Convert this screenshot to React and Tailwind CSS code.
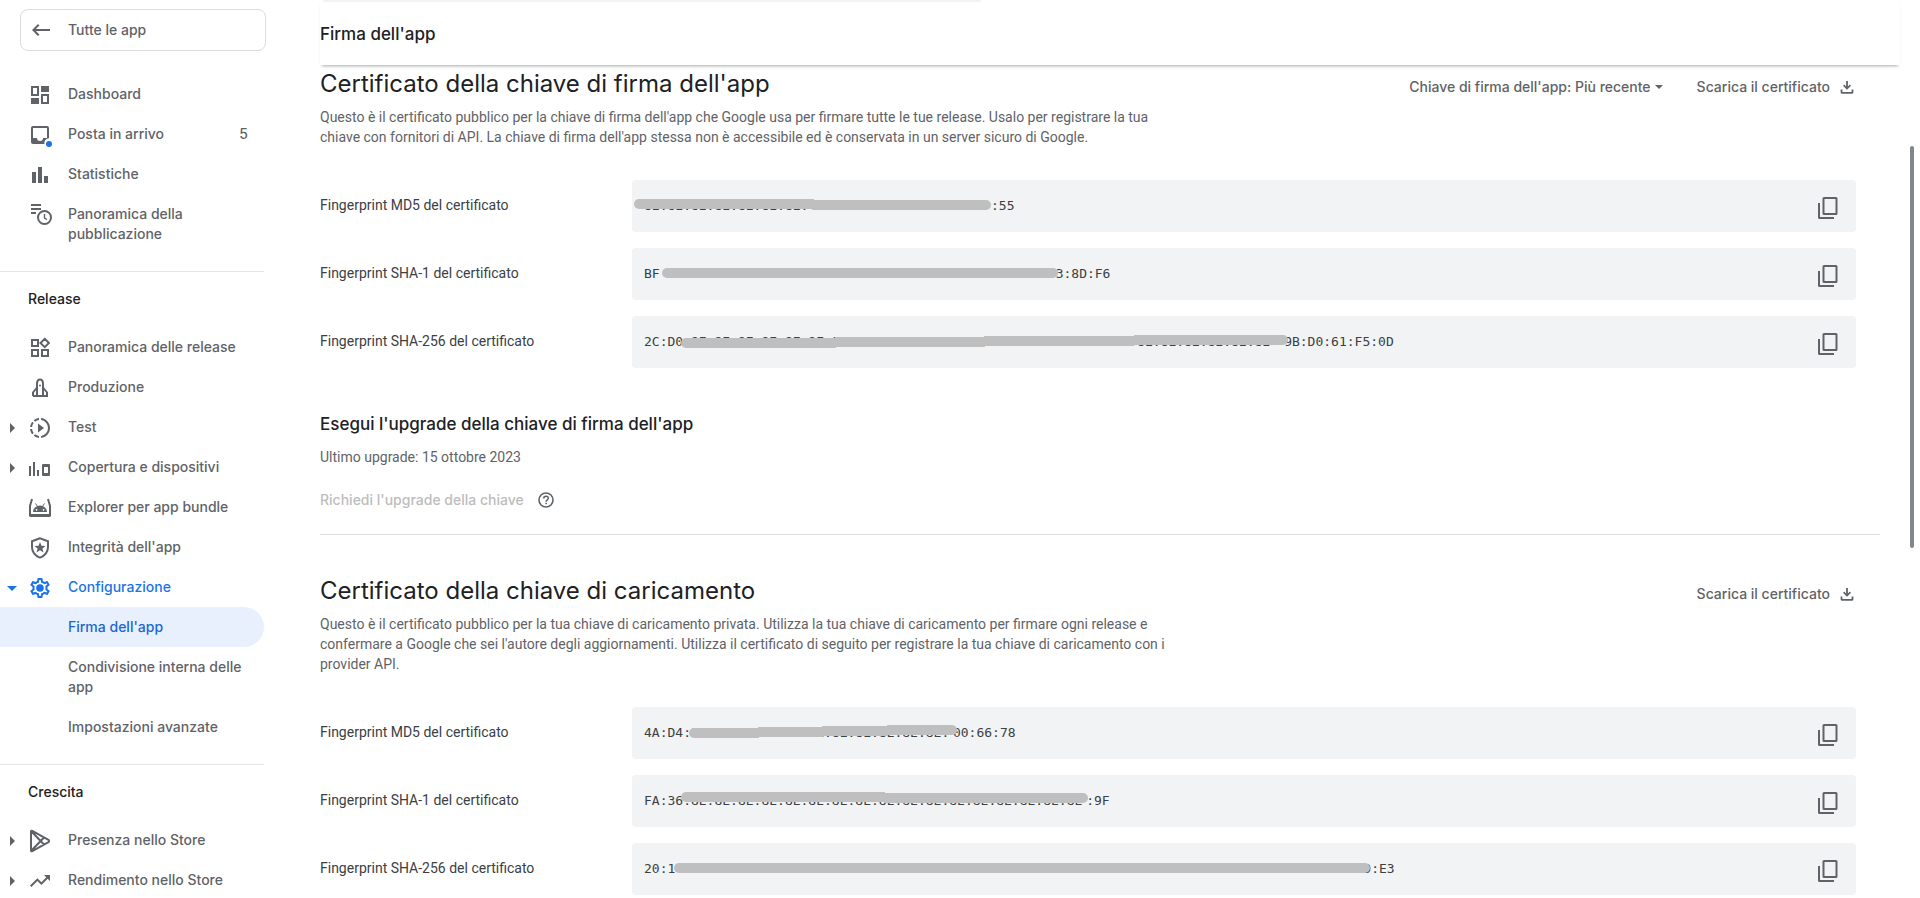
import React from "react";

const icons = {
  dashboard: (
    <path
      fill="currentColor"
      fillRule="evenodd"
      d="M3 3h8v10H3zM5 5v6h4V5zM13 3h8v6h-8zM3 15h8v6H3zM13 11h8v10h-8zM15 13v6h4v-6z"
    />
  ),
  inbox: (
    <>
      <path
        fill="currentColor"
        fillRule="evenodd"
        d="M5 3h14a2 2 0 0 1 2 2v10.2a5 5 0 0 0-4.6 5.8H5a2 2 0 0 1-2-2V5c0-1.100.9-2 2-2zM5 5v10h4a3 3 0 0 0 6 0h4V5z"
      />
      <circle cx="21" cy="21" r="3" fill="#1a73e8" />
    </>
  ),
  stats: <path fill="currentColor" d="M4 9h4v11H4zM10 4h4v16h-4zM16 13h4v7h-4z" />,
  publishing: (
    <>
      <path fill="currentColor" d="M3 1h10v2H3zM3 5h10v2H3zM3 9h5v2H3z" />
      <circle cx="16.500" cy="14.500" r="6.500" fill="#fff" stroke="currentColor" strokeWidth="2" />
      <path d="M16.500 11v4l2.500 1.500" fill="none" stroke="currentColor" strokeWidth="1.400" />
    </>
  ),
  releases: (
    <path
      fill="none"
      stroke="currentColor"
      strokeWidth="2"
      d="M4 4h6v6H4zM4 14h6v6H4zM14 14h6v6h-6zM16.700 2.800l4.200 4.200-4.200 4.200L12.500 7z"
    />
  ),
  rocket: (
    <>
      <path
        fill="none"
        stroke="currentColor"
        strokeWidth="2"
        d="M9 20V8c0-2.500 1-4.500 3-4.500s3 2 3 4.500v12M5 20h14v-3.500L15 11.500M5 20v-3.500L9 11.500"
      />
      <circle cx="12" cy="9.500" r="1" fill="currentColor" />
    </>
  ),
  test: (
    <path
      fill="currentColor"
      d="M13.050 9.790 10 7.500v9l3.050-2.290L16 12zM11 4.070V2.050c-2.010.2-3.840 1-5.320 2.210L7.100 5.690A7.940 7.940 0 0 1 11 4.070zM5.690 7.100 4.260 5.680A9.950 9.950 0 0 0 2.050 11h2.020c.18-1.460.76-2.790 1.620-3.900zM4.070 13H2.050c.2 2.010 1 3.840 2.210 5.320l1.430-1.430A7.900 7.900 0 0 1 4.070 13zm1.610 6.740A9.980 9.980 0 0 0 11 21.950v-2.020a7.940 7.940 0 0 1-3.900-1.620zM22 12c0 5.160-3.920 9.420-8.950 9.950v-2.020A8 8 0 0 0 20 12a8 8 0 0 0-6.950-7.930V2.050C18.080 2.580 22 6.840 22 12z"
    />
  ),
  reach: (
    <path
      fill="currentColor"
      fillRule="evenodd"
      d="M1 10h2v10H1zM5 6h2v14H5zM9 14h2v6H9zM15 8h6a1 1 0 0 1 1 1v10a1 1 0 0 1-1 1h-6a1 1 0 0 1-1-1V9a1 1 0 0 1 1-1zM16 11v6h4v-6z"
    />
  ),
  bundle: (
    <>
      <path fill="none" stroke="currentColor" strokeWidth="2" d="M4 3 2 10v9.500h20V10l-2-7" />
      <path stroke="currentColor" strokeWidth="1" d="m7.500 7.500 2 3M16.500 7.500l-2 3" />
      <path
        fill="currentColor"
        fillRule="evenodd"
        d="M5 16a7 6.500 0 0 1 14 0zM8.500 13a.8.8 0 1 0 .1 0zM15.500 13a.8.8 0 1 0 .1 0z"
      />
      <path fill="currentColor" d="M2 18h20v3H2z" />
    </>
  ),
  shield: (
    <>
      <path
        fill="none"
        stroke="currentColor"
        strokeWidth="2"
        d="M12 2.200 4 5.200v6c0 4.700 3.300 9 8 10.400 4.700-1.400 8-5.700 8-10.400v-6z"
      />
      <path
        fill="currentColor"
        d="m12 6 1.500 3.800 4.100.2-3.200 2.600 1.100 4-3.500-2.300-3.500 2.300 1.100-4L6.400 10l4.100-.2z"
      />
    </>
  ),
  settings: (
    <>
      <path
        fill="currentColor"
        d="M19.430 12.980c.04-.32.070-.64.070-.98s-.03-.66-.07-.98l2.110-1.650c.19-.15.24-.42.12-.64l-2-3.460a.5.5 0 0 0-.61-.22l-2.490 1a7.300 7.300 0 0 0-1.690-.98l-.38-2.650A.49.49 0 0 0 14 2h-4a.49.49 0 0 0-.49.420l-.38 2.650c-.61.250-1.170.59-1.690.98l-2.490-1a.5.5 0 0 0-.61.220l-2 3.460a.49.49 0 0 0 .12.640l2.110 1.650c-.04.320-.07.650-.07.980s.03.660.070.980l-2.110 1.650a.49.49 0 0 0-.12.640l2 3.460c.12.220.39.300.61.220l2.490-1c.52.400 1.080.73 1.690.98l.38 2.650c.03.240.24.420.49.420h4c.25 0 .46-.18.49-.42l.38-2.650c.61-.25 1.170-.59 1.690-.98l2.490 1c.23.090.49 0 .61-.22l2-3.460a.49.49 0 0 0-.12-.64zm-1.980-1.710c.04.310.050.520.050.730s-.02.430-.05.730l-.14 1.130.89.700 1.080.84-.7 1.210-1.270-.51-1.040-.42-.9.680c-.43.320-.84.560-1.250.73l-1.060.43-.16 1.130-.2 1.350h-1.400l-.35-2.480-1.060-.43c-.43-.18-.83-.41-1.230-.71l-.91-.7-1.060.43-1.270.51-.7-1.210 1.970-1.540-.14-1.130a7 7 0 0 1 0-1.480l.14-1.130-1.970-1.540.7-1.210 1.270.51 1.040.42.9-.68c.43-.32.840-.56 1.250-.73l1.060-.43.36-2.480h1.390l.35 2.480 1.060.43c.43.180.83.410 1.230.71l.91.700 1.060-.43 1.270-.51.7 1.210-1.970 1.540z"
      />
      <circle cx="12" cy="12" r="3.800" fill="currentColor" />
    </>
  ),
  play: (
    <path
      fill="none"
      stroke="currentColor"
      strokeWidth="2"
      strokeLinejoin="round"
      d="M3 2.500v19c0 .8.700 1 1.300.7L20.500 13.100c.8-.5.800-1.700 0-2.200L4.300 1.800C3.700 1.500 3 1.700 3 2.500zM3.500 21.500 16 8.500M3.500 2.500 16 15.500"
    />
  ),
  trending: (
    <path
      fill="currentColor"
      d="m16 6 2.290 2.290-4.880 4.880-4-4L2 16.590 3.410 18l6-6 4 4 6.300-6.290L22 12V6z"
    />
  ),
};

function Icon({ name }) {
  return (
    <svg viewBox="0 0 24 24" aria-hidden="true" className="size-6 shrink-0 overflow-visible">
      {icons[name]}
    </svg>
  );
}

function Caret({ open }) {
  return (
    <svg viewBox="0 0 24 24" aria-hidden="true" className="size-6 shrink-0">
      {open ? <path fill="currentColor" d="M7 10h10l-5 5z" /> : <path fill="currentColor" d="M10 7v10l5-5z" />}
    </svg>
  );
}

function NavItem({ icon, label, caret, count, active }) {
  return (
    <li>
      <a
        href="#"
        className={`flex items-start py-[10px] pr-4 leading-5 ${active ? "text-[#1a73e8]" : "text-[#5f6368]"}`}
      >
        <span className="-mt-px -mb-[3px] flex w-7 shrink-0">{caret && <Caret open={caret === "open"} />}</span>
        <span className="-mt-px -mb-[3px] flex">
          <Icon name={icon} />
        </span>
        <span className="ml-4 flex-1">{label}</span>
        {count && <span>{count}</span>}
      </a>
    </li>
  );
}

function SubItem({ label, active }) {
  return (
    <li>
      <a
        href="#"
        aria-current={active ? "page" : undefined}
        className={`block rounded-r-full py-[10px] pr-4 pl-[68px] leading-5 ${active ? "bg-[#e8f0fe] text-[#1967d2]" : "text-[#5f6368]"}`}
      >
        {label}
      </a>
    </li>
  );
}

function Sidebar() {
  return (
    <nav aria-label="Menu" className="w-[264px] shrink-0 font-['Inter',sans-serif] text-sm font-medium">
      <a
        href="#"
        className="mt-[9px] -mr-[2px] ml-5 flex h-[42px] items-center gap-[15px] rounded-lg border border-[#dadce0] px-2 text-[#5f6368]"
      >
        <svg viewBox="0 0 24 24" aria-hidden="true" className="size-6">
          <path fill="currentColor" d="M21 11H6.830l3.580-3.590L9 6l-6 6 6 6 1.410-1.410L6.830 13H21z" />
        </svg>
        <span className="leading-5">Tutte le app</span>
      </a>
      <ul className="mt-[23px] border-b border-[#e4e6e8] pb-[17px]">
        <NavItem icon="dashboard" label="Dashboard" />
        <NavItem icon="inbox" label="Posta in arrivo" count="5" />
        <NavItem icon="stats" label="Statistiche" />
        <NavItem icon="publishing" label="Panoramica della pubblicazione" />
      </ul>
      <h2 className="mt-[15px] mb-4 pl-7 leading-6 text-[#202124]">Release</h2>
      <ul className="border-b border-[#e4e6e8] pb-[17px]">
        <NavItem icon="releases" label="Panoramica delle release" />
        <NavItem icon="rocket" label="Produzione" />
        <NavItem icon="test" label="Test" caret="closed" />
        <NavItem icon="reach" label="Copertura e dispositivi" caret="closed" />
        <NavItem icon="bundle" label="Explorer per app bundle" />
        <NavItem icon="shield" label="Integrità dell'app" />
        <NavItem icon="settings" label="Configurazione" caret="open" active />
        <SubItem label="Firma dell'app" active />
        <SubItem label="Condivisione interna delle app" />
        <SubItem label="Impostazioni avanzate" />
      </ul>
      <h2 className="mt-[15px] mb-4 pl-7 leading-6 text-[#202124]">Crescita</h2>
      <ul>
        <NavItem icon="play" label="Presenza nello Store" caret="closed" />
        <NavItem icon="trending" label="Rendimento nello Store" caret="closed" />
      </ul>
    </nav>
  );
}

function Fingerprint({ label, start, end, gap, masks, fill }) {
  return (
    <div className="flex items-start">
      <dt className="w-78 shrink-0 pt-[15px] text-sm leading-5 text-[#3c4043]">{label}</dt>
      <dd className="relative flex h-13 flex-1 items-start justify-between rounded bg-[#f1f3f4] pr-4 pl-3">
        <div className="flex pt-4 font-['DejaVu_Sans_Mono',monospace] text-[13px] leading-5 whitespace-nowrap text-[#3c4043]">
          {start && <span>{start}</span>}
          <span aria-hidden="true" className={gap}>
            {fill}
          </span>
          <span>{end}</span>
        </div>
        {masks.map((m) => (
          <span key={m} className={`absolute h-[10px] bg-[#bfbfbf] ${m}`} />
        ))}
        <button type="button" aria-label={`Copia ${label}`} className="pt-4 text-[#5f6368]">
          <svg viewBox="0 0 24 24" aria-hidden="true" className="size-6">
            <path
              fill="currentColor"
              fillRule="evenodd"
              d="M8 1h12a1.500 1.500 0 0 1 1.500 1.500v15A1.500 1.500 0 0 1 20 19H8a1.500 1.500 0 0 1-1.500-1.500v-15A1.500 1.500 0 0 1 8 1zM8.500 3v14h11V3zM2 7h2v14h14v2H3.500A1.500 1.500 0 0 1 2 21.500z"
            />
          </svg>
        </button>
      </dd>
    </div>
  );
}

function Download() {
  return (
    <button
      type="button"
      className="flex items-center gap-2 font-['Inter',sans-serif] text-sm leading-5 font-medium text-[#5f6368]"
    >
      Scarica il certificato
      <svg viewBox="0 0 18 18" aria-hidden="true" className="size-[18px]">
        <path fill="none" stroke="currentColor" strokeWidth="1.800" d="M9 3v8M3.500 11.500v2.700c0 .4.300.7.700.7h9.600c.4 0 .7-.3.700-.7v-2.700" />
        <path fill="currentColor" d="M5 7.800 6.200 6.600 9 9.400l2.800-2.800L13 7.800l-4 4z" />
      </svg>
    </button>
  );
}

export default function App() {
  return (
    <div className="flex h-screen overflow-hidden bg-white font-['Roboto',sans-serif] text-[#202124]">
      <Sidebar />
      <main className="relative min-w-0 flex-1 pr-5 pl-14">
        <header className="h-[65px] shadow-[0_3px_3px_-2px_rgba(60,64,67,0.45)]">
          <div className="ml-[3px] h-[2px] w-[658px] rounded-b bg-[#f1f3f4]" />
          <h1 className="pt-5 font-['Inter',sans-serif] text-[17px] leading-6 font-medium">Firma dell'app</h1>
        </header>

        <section className="mr-5 border-b border-[#dadce0] pb-[22px]">
          <div className="flex items-start justify-between pt-[3px] pr-6">
            <h2 className="font-['Inter',sans-serif] text-2xl leading-8">Certificato della chiave di firma dell'app</h2>
            <div className="flex items-center gap-7 pt-[9px]">
              <button
                type="button"
                className="flex items-center font-['Inter',sans-serif] text-sm leading-5 font-medium text-[#5f6368]"
              >
                Chiave di firma dell'app: Più recente
                <svg viewBox="0 0 18 18" aria-hidden="true" className="size-[18px]">
                  <path fill="currentColor" d="M4 7h8l-4 4z" />
                </svg>
              </button>
              <Download />
            </div>
          </div>
          <p className="mt-[7px] max-w-[880px] text-sm leading-5 text-[#5f6368]">
            Questo è il certificato pubblico per la chiave di firma dell'app che Google usa per firmare tutte le tue
            release. Usalo per registrare la tua
            <br />
            chiave con fornitori di API. La chiave di firma dell'app stessa non è accessibile ed è conservata in un
            server sicuro di Google.
          </p>
          <dl className="mt-[33px] mr-6 flex flex-col gap-4">
            <Fingerprint
              label="Fingerprint MD5 del certificato"
              end=":55"
              gap="w-[347px]"
              fill={"8E:".repeat(7)}
              masks={["left-[2px] top-[19px] w-[180px] rounded-l-full", "left-[180px] top-[20px] w-[179px] rounded-r-full"]}
            />
            <Fingerprint
              label="Fingerprint SHA-1 del certificato"
              start="BF"
              end="3:8D:F6"
              gap="w-[396px]"
              masks={["left-[30px] top-[20px] w-[396px] rounded-full"]}
            />
            <Fingerprint
              label="Fingerprint SHA-256 del certificato"
              start="2C:D0"
              end="9B:D0:61:F5:0D"
              gap="w-[601px]"
              fill={":8E".repeat(25)}
              masks={[
                "left-[49px] top-[22px] w-[155px] rounded-l-full",
                "left-[203px] top-[21px] w-[150px]",
                "left-[352px] top-[20px] w-[150px]",
                "left-[502px] top-[19px] w-[154px] rounded-r-full",
              ]}
            />
          </dl>
          <h3 className="mt-11 font-['Inter',sans-serif] text-[17px] leading-6 font-medium">
            Esegui l'upgrade della chiave di firma dell'app
          </h3>
          <p className="mt-[11px] text-sm leading-5 text-[#5f6368]">Ultimo upgrade: 15 ottobre 2023</p>
          <div className="mt-[21px] flex items-center gap-3">
            <button
              type="button"
              disabled
              className="font-['Inter',sans-serif] text-sm leading-6 font-medium text-[#bdbdbd]"
            >
              Richiedi l'upgrade della chiave
            </button>
            <button type="button" aria-label="Guida" className="text-[#5f6368]">
              <svg viewBox="0 0 20 20" aria-hidden="true" className="size-5">
                <circle cx="10" cy="10" r="7" fill="none" stroke="currentColor" strokeWidth="1.600" />
                <path
                  fill="none"
                  stroke="currentColor"
                  strokeWidth="1.500"
                  d="M7.700 8.500c0-3 4.600-3 4.600-.3 0 1.600-2.200 1.700-2.200 3.500M10.100 12.800v1.500"
                />
              </svg>
            </button>
          </div>
        </section>

        <section className="mr-11 pt-10">
          <div className="flex items-start justify-between">
            <h2 className="font-['Inter',sans-serif] text-2xl leading-8">Certificato della chiave di caricamento</h2>
            <div className="pt-[9px]">
              <Download />
            </div>
          </div>
          <p className="mt-[7px] max-w-[880px] text-sm leading-5 text-[#5f6368]">
            Questo è il certificato pubblico per la tua chiave di caricamento privata. Utilizza la tua chiave di
            caricamento per firmare ogni release e<br />
            confermare a Google che sei l'autore degli aggiornamenti. Utilizza il certificato di seguito per registrare
            la tua chiave di caricamento con i<br />
            provider API.
          </p>
          <dl className="mt-[33px] flex flex-col gap-4">
            <Fingerprint
              label="Fingerprint MD5 del certificato"
              start="4A:D4:"
              end="00:66:78"
              gap="w-[262px]"
              fill={"8E:".repeat(11)}
              masks={[
                "left-[57px] top-[21px] w-[70px] rounded-l-full",
                "left-[126px] top-[20px] w-[65px]",
                "left-[190px] top-[19px] w-[66px]",
                "left-[255px] top-[18px] w-[70px] rounded-r-full",
              ]}
            />
            <Fingerprint
              label="Fingerprint SHA-1 del certificato"
              start="FA:36"
              end=":9F"
              gap="w-[403px]"
              fill={":8E".repeat(17)}
              masks={["left-[49px] top-[17px] w-[204px] rounded-l-full", "left-[252px] top-[18px] w-[204px] rounded-r-full"]}
            />
            <Fingerprint
              label="Fingerprint SHA-256 del certificato"
              start="20:1"
              end="D:E3"
              gap="w-[688px]"
              masks={["left-[42px] top-[20px] w-[696px] rounded-full"]}
            />
          </dl>
        </section>
        <div aria-hidden="true" className="absolute top-[146px] right-[6px] h-[402px] w-1 rounded-full bg-[#80868b]" />
      </main>
    </div>
  );
}
